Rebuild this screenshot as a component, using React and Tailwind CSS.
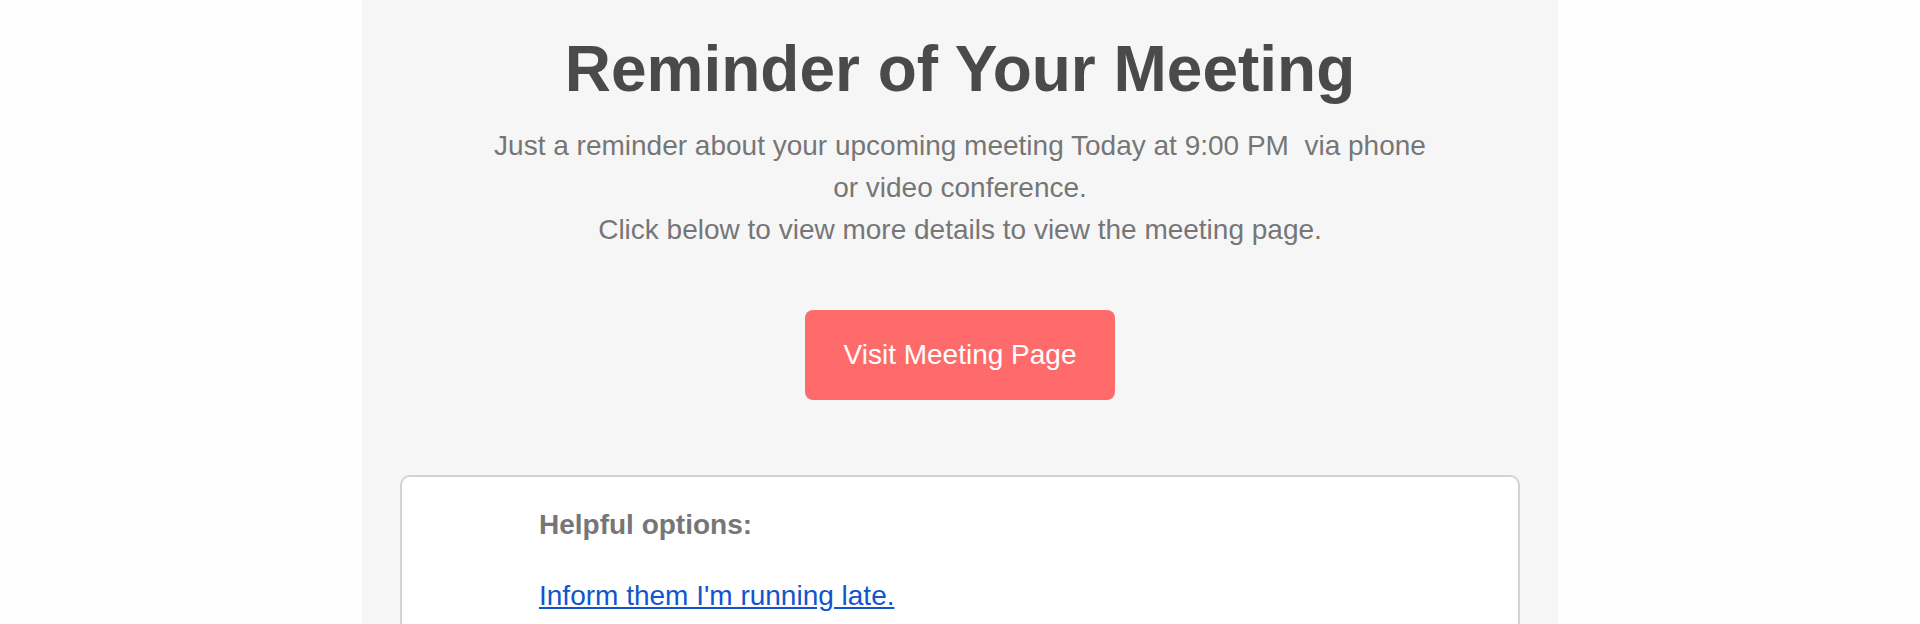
import React from 'react'

const App = () => {
  return (
    <div className="min-h-screen bg-[#fefefe] font-['Liberation_Sans',Arial,sans-serif]">
      <div className="mx-auto w-[1196px] min-h-[624px] bg-[#f6f6f6] px-[38px] pt-[33px] pb-10">
        <h1 className="text-center text-[64px] leading-[72px] font-bold text-[#4a4a4a]">
          Reminder of Your Meeting
        </h1>
        <div className="mx-auto mt-[20px] w-[960px] text-center text-[28px] leading-[42px] text-[#767676]">
          <p>Just a reminder about your upcoming meeting Today at 9:00 PM&nbsp; via phone or video conference.</p>
          <p>Click below to view more details to view the meeting page.</p>
        </div>

        <div className="mt-[59px] flex justify-center">
          <a
            href="#"
            className="rounded-lg bg-[#ff6b6b] px-[39px] py-[24px] text-[28px] leading-[42px] text-white"
          >
            Visit Meeting Page
          </a>
        </div>

        <div className="mt-[75px] rounded-[10px] border-2 border-[#d2d2d2] bg-white pl-[137px] pt-[27px] pb-10">
          <p className="text-[28px] leading-[42px] font-bold text-[#767676]">Helpful options:</p>
          <a href="#" className="mt-[29px] inline-block text-[28px] leading-[42px] text-[#1155cc] underline">
            Inform them I'm running late.
          </a>
        </div>
      </div>
    </div>
  )
}

export default App
